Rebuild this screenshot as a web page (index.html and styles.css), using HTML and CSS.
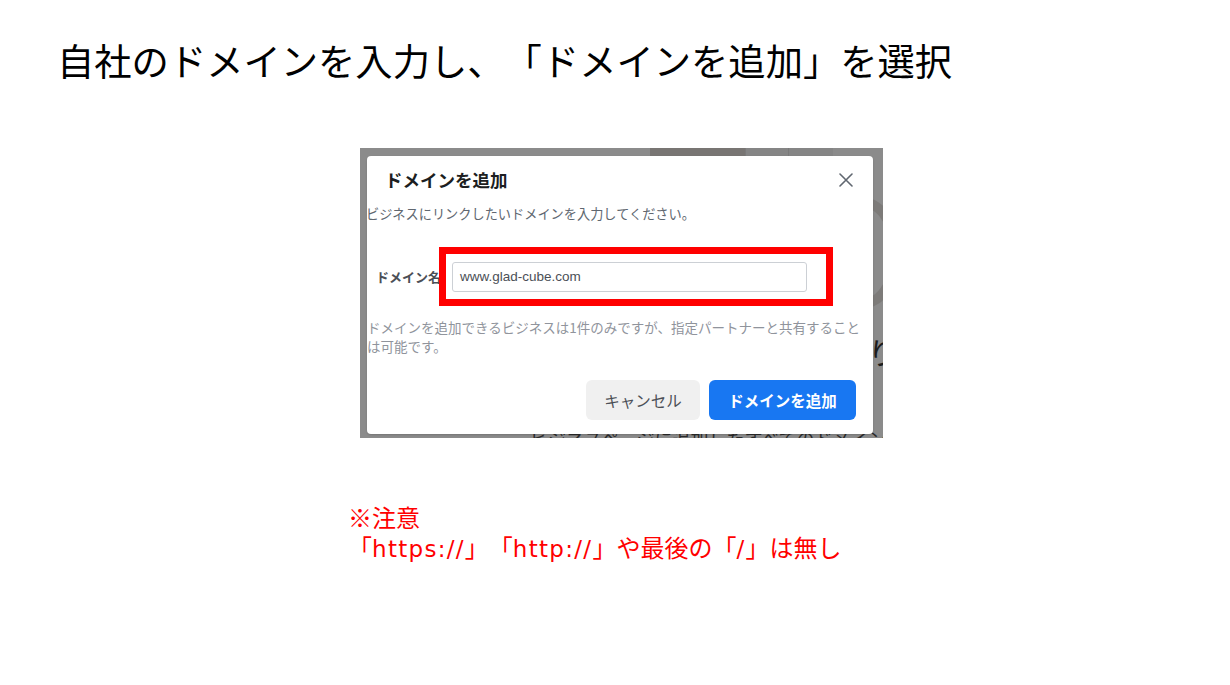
FILE: index.html
```html
<!DOCTYPE html>
<html lang="ja">
<head>
<meta charset="utf-8">
<title>ドメインを追加</title>
<link rel="stylesheet" href="styles.css">
</head>
<body>
<div class="page">
  <h1 class="heading">自社のドメインを入力し、「ドメインを追加」を選択</h1>

  <div class="shot">
    <div class="bg-strip">
      <span class="seg seg-a"></span><span class="seg seg-b"></span><span class="seg seg-c"></span><span class="seg seg-d"></span>
    </div>
    <div class="bg-ring"></div>
    <div class="bg-glyph">り</div>
    <div class="bg-text">ビジネスページに追加したすべてのドメインが</div>

    <div class="dialog">
      <div class="dlg-header">
        <div class="dlg-title">ドメインを追加</div>
        <svg class="dlg-close" width="14" height="14" viewBox="0 0 14 14" aria-hidden="true">
          <path d="M1 1 L13 13 M13 1 L1 13" stroke="#606770" stroke-width="1.6" fill="none" stroke-linecap="round"/>
        </svg>
      </div>
      <div class="dlg-sub">ビジネスにリンクしたいドメインを入力してください。</div>
      <div class="dlg-row">
        <div class="dlg-label">ドメイン名</div>
        <div class="dlg-input">www.glad-cube.com</div>
      </div>
      <div class="dlg-note">ドメインを追加できるビジネスは1件のみですが、指定パートナーと共有すること<br>は可能です。</div>
      <div class="dlg-actions">
        <div class="btn btn-cancel">キャンセル</div>
        <div class="btn btn-add">ドメインを追加</div>
      </div>
      <div class="highlight"></div>
    </div>
  </div>

  <div class="caution">
    <div class="caution-line">※注意</div>
    <div class="caution-line">「<span class="latin">https://</span>」「<span class="latin">http://</span>」や最後の「<span class="latin">/</span>」は無し</div>
  </div>
</div>
</body>
</html>
```
FILE: styles.css
```css
html, body {
  margin: 0;
  padding: 0;
  background: #ffffff;
}

body {
  font-family: "Noto Sans CJK JP", "Noto Sans", sans-serif;
  color: #000;
  text-spacing-trim: space-all;
}

.page {
  width: 1230px;
  height: 685px;
  box-sizing: border-box;
  padding: 34px 0 0 57px;
  overflow: hidden;
}

.heading {
  margin: 0;
  font-size: 37.3px;
  font-weight: 400;
  line-height: 52px;
  color: #000;
  white-space: nowrap;
  text-spacing-trim: space-all;
}

.shot {
  position: relative;
  width: 523px;
  height: 290px;
  margin: 62px 0 0 303px;
  box-sizing: border-box;
  padding: 8px 0 0 7px;
  background: #8b8b8b;
  overflow: hidden;
}

.bg-strip {
  position: absolute;
  left: 0;
  top: 0;
  width: 523px;
  height: 8px;
  display: flex;
}

.seg {
  display: block;
  height: 8px;
}
.seg-a { width: 290px; background: #8b8b8b; }
.seg-b { width: 95px; background: #787573; }
.seg-c { width: 42px; background: #858585; border-left: 1px solid #7a7a7a; }
.seg-d { width: 44px; background: #858585; border-left: 1px solid #7a7a7a; }

.bg-ring {
  position: absolute;
  left: 470px;
  top: 50px;
  width: 70px;
  height: 110px;
  border-radius: 50%;
  border: 10px solid #7d7b79;
  box-sizing: border-box;
}

.bg-glyph {
  position: absolute;
  left: 508px;
  top: 188px;
  font-size: 30px;
  line-height: 30px;
  color: #1d1d1d;
}

.bg-text {
  position: absolute;
  left: 170px;
  top: 280px;
  font-size: 18px;
  line-height: 20px;
  color: #2a2a2a;
  white-space: nowrap;
}

.dialog {
  position: relative;
  width: 506px;
  height: 278px;
  background: #ffffff;
  border-radius: 4px;
  overflow: hidden;
  box-shadow: 0 1px 2px rgba(0, 0, 0, 0.15);
}

.dlg-header {
  height: 48px;
  display: flex;
  align-items: center;
  justify-content: space-between;
  padding: 0 20px 0 18px;
}

.dlg-title {
  font-size: 17.5px;
  font-weight: 700;
  color: #1c1e21;
  line-height: 24px;
  white-space: nowrap;
}

.dlg-close {
  display: block;
}

.dlg-sub {
  margin-left: -1px;
  font-size: 13.2px;
  line-height: 20px;
  color: #606770;
  white-space: nowrap;
}

.dlg-row {
  display: flex;
  align-items: center;
  margin-top: 38px;
  height: 30px;
  padding-left: 9px;
}

.dlg-label {
  width: 76px;
  flex: none;
  font-size: 13px;
  font-weight: 700;
  color: #4b4f56;
  white-space: nowrap;
  line-height: 30px;
}

.dlg-input {
  width: 355px;
  height: 30px;
  box-sizing: border-box;
  border: 1px solid #ccd0d5;
  border-radius: 3px;
  padding: 0 7px;
  font-family: "Liberation Sans", Arial, sans-serif;
  font-size: 13.5px;
  line-height: 28px;
  color: #4b4f56;
}

.dlg-note {
  margin-top: 26px;
  font-size: 13.5px;
  line-height: 19px;
  color: #90949c;
  white-space: nowrap;
}

.dlg-actions {
  display: flex;
  justify-content: flex-end;
  gap: 9px;
  margin-top: 24px;
  padding-right: 17px;
}

.btn {
  height: 40px;
  display: flex;
  align-items: center;
  justify-content: center;
  border-radius: 6px;
  box-sizing: border-box;
  white-space: nowrap;
}

.btn-cancel {
  width: 114px;
  background: #f0f0f0;
  color: #4b4f56;
  font-size: 15.5px;
}

.btn-add {
  width: 147px;
  background: #1877f2;
  color: #ffffff;
  font-size: 15.5px;
  font-weight: 700;
}

.highlight {
  position: absolute;
  left: 72px;
  top: 91px;
  width: 394px;
  height: 59px;
  box-sizing: border-box;
  border: 7px solid #ff0000;
}

.caution {
  margin: 64px 0 0 291px;
  font-size: 24px;
  color: #ff0000;
  white-space: nowrap;
}

.caution-line {
  height: 30px;
  line-height: 30px;
}

.latin {
  font-family: "DejaVu Sans", "Noto Sans", sans-serif;
  font-size: 23px;
  line-height: 30px;
  letter-spacing: 1.3px;
}
```
